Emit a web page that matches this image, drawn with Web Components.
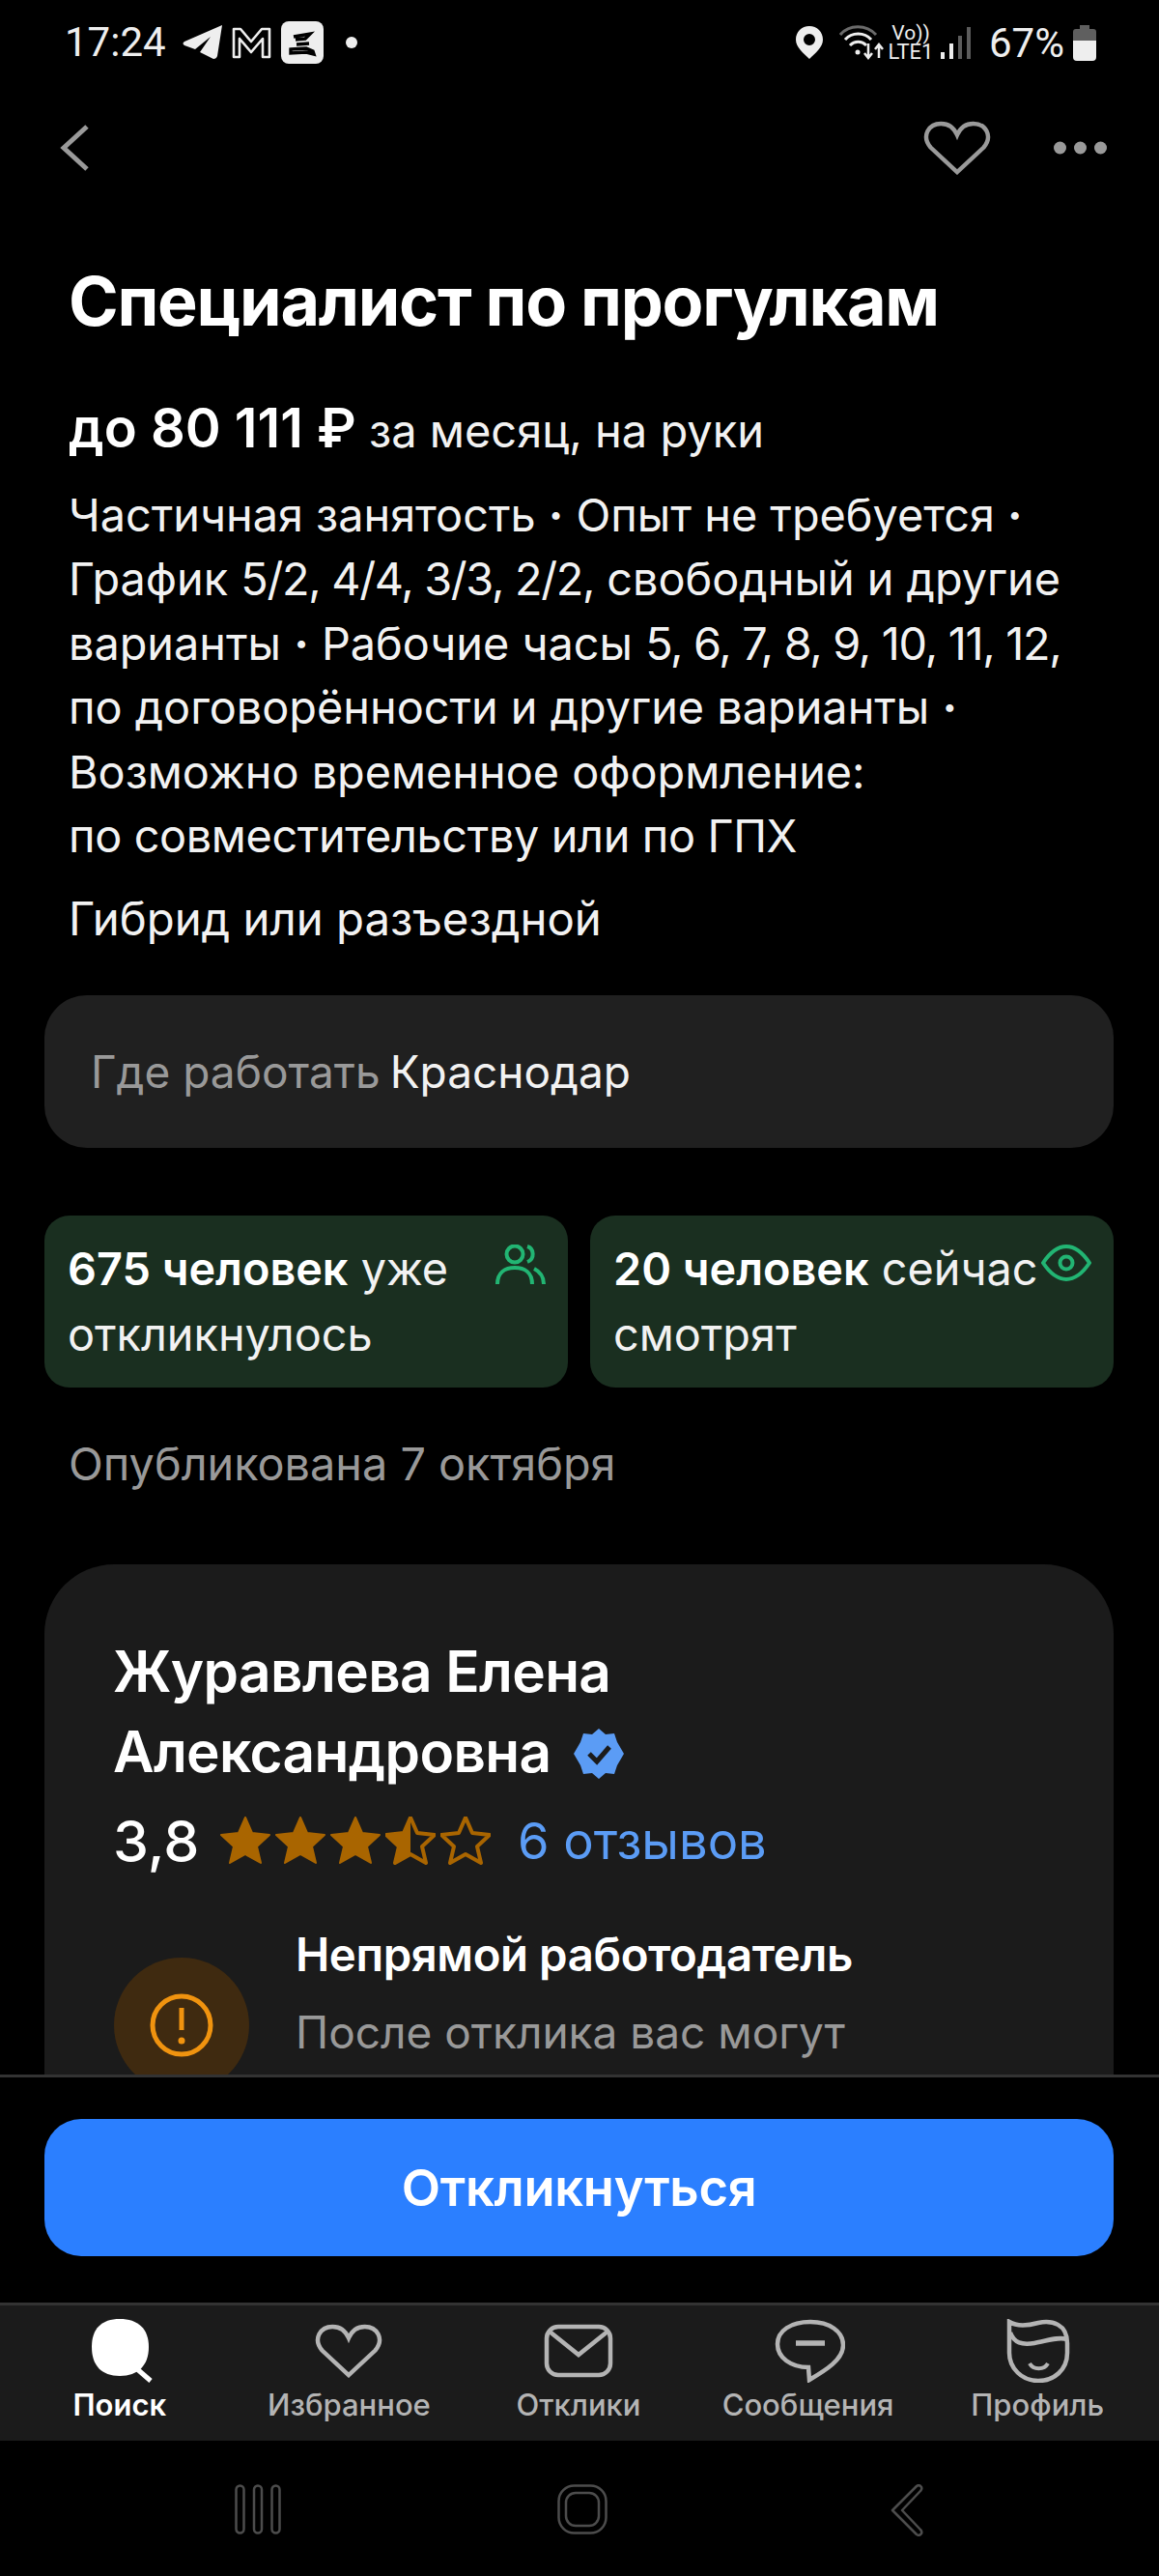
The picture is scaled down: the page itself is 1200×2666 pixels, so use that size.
<!DOCTYPE html>
<html lang="ru">
<head>
<meta charset="utf-8">
<title>Специалист по прогулкам</title>
<style>
html, body { margin: 0; padding: 0; background: #000; }
body { width: 1200px; height: 2666px; overflow: hidden; font-family: Inter, "Noto Sans", sans-serif; color: #fff; }
</style>
</head>
<body>
<job-screen>
  <status-bar slot="status"></status-bar>
  <top-bar slot="top"></top-bar>
  <job-summary slot="content"></job-summary>
  <place-box slot="content">Краснодар</place-box>
  <div slot="content" style="display:grid;grid-template-columns:542px 542px;gap:23px;margin:70px 46px 0">
    <stat-card icon="people"><b>675 человек</b> уже<br>откликнулось</stat-card>
    <stat-card icon="eye"><b>20 человек</b> сейчас<br>смотрят</stat-card>
  </div>
  <div slot="content" style="margin:44px 71px 0;font-size:46.8px;line-height:70px;color:#999">Опубликована 7 октября</div>
  <employer-card slot="content"></employer-card>
  <apply-bar slot="apply"></apply-bar>
  <tab-bar slot="tabs"></tab-bar>
  <nav-bar slot="nav"></nav-bar>
</job-screen>

<script>
class JobScreen extends HTMLElement {
  constructor() {
    super();
    this.attachShadow({mode: 'open'}).innerHTML = `
<style>
:host { display: flex; flex-direction: column; width: 1200px; height: 2666px; background: #000; }
.content { flex: 1; min-height: 0; overflow: hidden; }
</style>
<slot name="status"></slot>
<slot name="top"></slot>
<div class="content"><slot name="content"></slot></div>
<slot name="apply"></slot>
<slot name="tabs"></slot>
<slot name="nav"></slot>`;
  }
}

class StatusBar extends HTMLElement {
  constructor() {
    super();
    this.attachShadow({mode: 'open'}).innerHTML = `
<style>
:host { display: flex; align-items: center; justify-content: space-between; height: 88px; padding: 0 65px 0 67px; font-family: Roboto, sans-serif; color: #eee; }
.side { display: flex; align-items: center; }
.time { font-size: 42px; line-height: 88px; width: 121px; }
.pct { font-size: 42px; margin-left: 18px; width: 85px; }
svg { display: block; }
.lte { display: flex; flex-direction: column; align-items: center; width: 44px; margin-left: 6px; font-size: 22px; line-height: 19px; }
.lte span:first-child { font-size: 21px; }
</style>
<div class="side">
  <span class="time">17:24</span>
  <svg width="44" height="40" viewBox="0 0 44 40" fill="#eee"><path d="M42 2 L3 19 Q0 21 3 23 L14 27 L30 14 L19 30 L33 37 Q36 37 37 34 Z"/></svg>
  <svg width="45" height="34" viewBox="0 0 45 34" fill="none" stroke="#eee" stroke-width="2.6" style="margin-left:6px"><path d="M4 32 V3 H11 L22 16 L33 3 H41 V32 H34 V13 L22 27 L10 13 V32 Z" stroke-linejoin="round"/></svg>
  <svg width="44" height="44" viewBox="0 0 44 44" style="margin-left:8px"><rect width="44" height="44" rx="8" fill="#eee"/><path d="M13 16 L30 13 L25 18 L15 19 M16 24 L29 23 M10 29 L26 28 L33 31 L34 34 L26 32 L10 33 Z" fill="none" stroke="#000" stroke-width="3.4"/></svg>
  <svg width="12" height="12" viewBox="0 0 12 12" style="margin-left:23px"><circle cx="6" cy="6" r="6" fill="#eee"/></svg>
</div>
<div class="side">
  <svg width="28" height="34" viewBox="0 0 28 34"><path fill-rule="evenodd" fill="#eee" d="M14 0 C6 0 0 6 0 14 C0 22 8 28 14 34 C20 28 28 22 28 14 C28 6 22 0 14 0 Z M14 8 A6 6 0 1 1 14 20 A6 6 0 1 1 14 8 Z"/></svg>
  <svg width="46" height="36" viewBox="0 0 46 36" fill="none" style="margin-left:17px">
    <path d="M1 10 C10 -1 28 -1 38 10" stroke="#6a6a6a" stroke-width="3"/>
    <path d="M6 15 C13 7 26 7 33 15" stroke="#eee" stroke-width="3"/>
    <path d="M11 21 C16 16 23 16 28 21" stroke="#eee" stroke-width="3"/>
    <circle cx="19" cy="28" r="2.5" fill="#eee"/>
    <path d="M30 19 V34 M26 29 L30 34 L34 29 M41 34 V20 M37 25 L41 20 L45 25" stroke="#eee" stroke-width="2.5"/>
  </svg>
  <div class="lte"><span>Vo))</span><span>LTE1</span></div>
  <svg width="32" height="34" viewBox="0 0 32 34" style="margin-left:9px"><rect x="0" y="27" width="4" height="7" fill="#eee"/><rect x="9" y="18" width="4" height="16" fill="#eee"/><rect x="18" y="10" width="4" height="24" fill="#5c5c5c"/><rect x="27" y="1" width="4" height="33" fill="#5c5c5c"/></svg>
  <span class="pct">67%</span>
  <svg width="24" height="37" viewBox="0 0 24 37" style="margin-left:2px"><path d="M7 0 H17 V4 H21 Q24 4 24 7 V16 H0 V7 Q0 4 3 4 H7 Z" fill="#5f5f5f"/><path d="M0 16 H24 V33 Q24 37 20 37 H4 Q0 37 0 33 Z" fill="#eee"/></svg>
</div>`;
  }
}

class TopBar extends HTMLElement {
  constructor() {
    super();
    this.attachShadow({mode: 'open'}).innerHTML = `
<style>
:host { display: flex; align-items: center; height: 130px; padding: 0 54px 0 62px; }
svg { display: block; }
.gap { flex: 1; }
</style>
<svg width="30" height="50" viewBox="0 0 30 50" fill="none" stroke="#9a9a9a" stroke-width="5"><path d="M28 3 L4 25 L28 47"/></svg>
<div class="gap"></div>
<svg width="74" height="56" viewBox="0 0 72 57" fill="none" stroke="#9a9a9a" stroke-width="4.5"><path d="M36 54 L8 28 C-2 16 6 3 19 3 C27 3 33 8 36 15 C39 8 45 3 53 3 C66 3 74 16 64 28 Z"/></svg>
<svg width="55" height="14" viewBox="0 0 55 14" fill="#9a9a9a" style="margin-left:63px"><circle cx="6.5" cy="7" r="6.5"/><circle cx="27.5" cy="7" r="6.5"/><circle cx="48.5" cy="7" r="6.5"/></svg>`;
  }
}

class JobSummary extends HTMLElement {
  constructor() {
    super();
    this.attachShadow({mode: 'open'}).innerHTML = `
<style>
:host { display: block; padding: 52px 71px 0; color: #f2f2f2; font-family: Inter, sans-serif; }
h1 { margin: 0; font-size: 70px; line-height: 84px; font-weight: 700; letter-spacing: -1.3px; color: #fff; }
.pay { margin-top: 54px; font-size: 47px; line-height: 70px; white-space: nowrap; }
.pay b { font-size: 56px; font-weight: 600; color: #fff; }
.terms { margin-top: 19px; font-size: 46.8px; line-height: 66.4px; white-space: nowrap; }
.format { margin-top: 20px; font-size: 47.3px; line-height: 66px; }
.tight { letter-spacing: -1.3px; }
.short { letter-spacing: -0.35px; }
i { font-style: normal; font-weight: 700; }
</style>
<h1>Специалист по прогулкам</h1>
<div class="pay"><b>до 80 111 ₽</b> за месяц, на руки</div>
<div class="terms">Частичная занятость <i>·</i> Опыт не требуется <i>·</i><br>График <span class="tight">5/2, 4/4, 3/3, 2/2,</span> свободный и другие<br>варианты <i>·</i> Рабочие часы <span class="tight">5, 6, 7, 8, 9, 10, 11, 12,</span><br>по договорённости и другие варианты <i>·</i><br>Возможно временное оформление:<br><span class="short">по совместительству или по ГПХ</span></div>
<div class="format">Гибрид или разъездной</div>`;
  }
}

class PlaceBox extends HTMLElement {
  constructor() {
    super();
    this.attachShadow({mode: 'open'}).innerHTML = `
<style>
:host { display: flex; align-items: center; height: 158px; margin: 46px 47px 0 46px; padding-left: 48px; background: #202020; border-radius: 44px; font-size: 46px; color: #f2f2f2; }
span { color: #999; margin-right: 10px; }
</style>
<span>Где работать</span><slot></slot>`;
  }
}

const STAT_ICONS = {
  people: `<svg width="52" height="42" viewBox="0 0 52 42" fill="none" stroke="#22b573" stroke-width="4"><circle cx="20" cy="10" r="8.5"/><path d="M2 41 C2 29 10 24 20 24 C30 24 38 29 38 41"/><path d="M33 2 C40 4 41 15 33 18 M40 25 C46 28 50 33 50 41"/></svg>`,
  eye: `<svg width="52" height="38" viewBox="0 0 52 38" fill="none" stroke="#22b573" stroke-width="4"><path d="M2 19 C10 7 18 2 26 2 C34 2 42 7 50 19 C42 31 34 36 26 36 C18 36 10 31 2 19 Z"/><circle cx="26" cy="19" r="6.5"/></svg>`
};

class StatCard extends HTMLElement {
  constructor() {
    super();
    this.attachShadow({mode: 'open'}).innerHTML = `
<style>
:host { display: block; position: relative; height: 178px; box-sizing: border-box; padding: 21px 0 0 24px; background: #1a2f20; border-radius: 26px; font-size: 46.8px; line-height: 68px; color: #f2f2f2; white-space: nowrap; }
::slotted(b) { font-weight: 600; color: #fff; }
.icon { position: absolute; top: 30px; right: 23px; }
svg { display: block; }
</style>
<slot></slot>
<div class="icon">${STAT_ICONS[this.getAttribute('icon')]}</div>`;
  }
}

const STAR = 'M26 1 L33 17 L51 19 L38 31 L42 48 L26 39 L10 48 L14 31 L1 19 L19 17 Z';

class EmployerCard extends HTMLElement {
  constructor() {
    super();
    this.attachShadow({mode: 'open'}).innerHTML = `
<style>
:host { display: block; margin: 69px 47px 0 46px; padding: 69px 72px 0; height: 600px; box-sizing: border-box; background: #1b1b1b; border-radius: 72px 72px 0 0; color: #fff; }
.name { margin-left: -1px; font-size: 58.5px; line-height: 83px; font-weight: 600; letter-spacing: -0.6px; }
.name svg { vertical-align: -7px; margin-left: 23px; }
.rating { display: flex; align-items: center; height: 60px; margin-top: 21px; }
.score { margin-left: -1px; font-size: 59px; font-weight: 500; width: 111px; }
.stars { display: flex; gap: 5px; }
svg { display: block; }
.name svg { display: inline-block; }
.reviews { margin-left: 28px; font-size: 52.5px; color: #5b9cf5; }
.warn { display: flex; margin-top: 26px; }
.circle { flex: none; display: flex; align-items: center; justify-content: center; width: 140px; height: 140px; margin-top: 65px; border-radius: 50%; background: #3f2a10; }
.text { margin-left: 48px; margin-top: 32px; }
.t1 { font-size: 47.3px; line-height: 60px; font-weight: 600; letter-spacing: -0.4px; }
.t2 { margin-top: 20px; font-size: 46px; line-height: 60px; color: #999; }
</style>
<div class="name">Журавлева Елена<br>Александровна<svg width="52" height="52" viewBox="0 0 52 52"><path fill="#5b9cf5" d="M26 0 L33 6 L42 5 L45 14 L52 26 L45 38 L42 47 L33 46 L26 52 L19 46 L10 47 L7 38 L0 26 L7 14 L10 5 L19 6 Z"/><path d="M16 26 L24 34 L37 19" fill="none" stroke="#1b1b1b" stroke-width="5"/></svg></div>
<div class="rating">
  <span class="score">3,8</span>
  <div class="stars">
    <svg width="52" height="50" viewBox="0 0 52 50"><path fill="#a96500" stroke="#a96500" stroke-width="2" stroke-linejoin="round" d="${STAR}"/></svg>
    <svg width="52" height="50" viewBox="0 0 52 50"><path fill="#a96500" stroke="#a96500" stroke-width="2" stroke-linejoin="round" d="${STAR}"/></svg>
    <svg width="52" height="50" viewBox="0 0 52 50"><path fill="#a96500" stroke="#a96500" stroke-width="2" stroke-linejoin="round" d="${STAR}"/></svg>
    <svg width="52" height="50" viewBox="0 0 52 50"><path fill="none" stroke="#a96500" stroke-width="4" stroke-linejoin="round" d="${STAR}"/><path fill="#a96500" d="M26 1 L19 17 L1 19 L14 31 L10 48 L26 39 Z"/></svg>
    <svg width="52" height="50" viewBox="0 0 52 50"><path fill="none" stroke="#a96500" stroke-width="4" stroke-linejoin="round" d="${STAR}"/></svg>
  </div>
  <span class="reviews">6 отзывов</span>
</div>
<div class="warn">
  <div class="circle"><svg width="66" height="66" viewBox="0 0 66 66" fill="none" stroke="#f0930f" stroke-width="5"><circle cx="33" cy="33" r="30"/><path d="M33 15 V38"/><circle cx="33" cy="49" r="2.5" fill="#f0930f" stroke-width="2"/></svg></div>
  <div class="text"><div class="t1">Непрямой работодатель</div><div class="t2">После отклика вас могут</div></div>
</div>`;
  }
}

class ApplyBar extends HTMLElement {
  constructor() {
    super();
    this.attachShadow({mode: 'open'}).innerHTML = `
<style>
:host { display: block; height: 236px; box-sizing: border-box; border-top: 3px solid #333; padding: 43px 47px 0 46px; background: #000; }
button { display: block; width: 100%; height: 142px; border: 0; border-radius: 38px; background: #2b7fff; color: #fff; font: 600 52.5px Inter, sans-serif; letter-spacing: -0.3px; }
</style>
<button>Откликнуться</button>`;
  }
}

class TabItem extends HTMLElement {
  constructor() {
    super();
    this.attachShadow({mode: 'open'}).innerHTML = `
<style>
:host { display: flex; flex-direction: column; align-items: center; color: #b4b4b4; font-size: 31px; line-height: 40px; font-weight: 500; }
:host([active]) { color: #fff; font-weight: 600; }
.ico { height: 80px; display: flex; align-items: flex-end; justify-content: center; margin-bottom: 3px; }
</style>
<div class="ico"><slot name="icon"></slot></div>
<slot></slot>`;
  }
}

class TabBar extends HTMLElement {
  constructor() {
    super();
    this.attachShadow({mode: 'open'}).innerHTML = `
<style>
:host { display: grid; grid-template-columns: repeat(5, 237.6px); height: 143px; box-sizing: border-box; border-top: 3px solid #333; padding: 0 7px 0 5px; background: #1b1b1b; font-family: Inter, sans-serif; }
svg { display: block; }
</style>
<tab-item active>
  <svg slot="icon" width="70" height="66" viewBox="0 0 70 66"><path fill="#fff" d="M35 0 C54 0 65 10 65 29 C65 48 54 59 35 59 C16 59 6 48 6 29 C6 10 16 0 35 0 Z"/><path d="M52 51 L67 64" stroke="#fff" stroke-width="5"/></svg>
  Поиск
</tab-item>
<tab-item>
  <svg slot="icon" width="72" height="56" viewBox="0 0 72 57" fill="none" stroke="#b4b4b4" stroke-width="4.5" style="margin-bottom:5px"><path d="M36 54 L8 28 C-2 16 6 3 19 3 C27 3 33 8 36 15 C39 8 45 3 53 3 C66 3 74 16 64 28 Z"/></svg>
  Избранное
</tab-item>
<tab-item>
  <svg slot="icon" width="72" height="56" viewBox="0 0 72 56" fill="none" stroke="#b4b4b4" stroke-width="4.5" style="margin-bottom:5px"><rect x="3" y="3" width="66" height="50" rx="12"/><path d="M6 8 L36 32 L66 8"/></svg>
  Отклики
</tab-item>
<tab-item>
  <svg slot="icon" width="76" height="66" viewBox="0 0 76 66" fill="none" stroke="#b4b4b4" stroke-width="4.5"><path d="M38 50 C20 50 6 40 6 26 C6 12 20 3 40 3 C60 3 74 13 74 27 C74 42 56 53 39 63 Z"/><path d="M25 25 H55" stroke-width="5.5"/></svg>
  Сообщения
</tab-item>
<tab-item>
  <svg slot="icon" width="70" height="66" viewBox="0 0 70 66" fill="none" stroke="#b4b4b4" stroke-width="4.5"><path d="M6 3 C14 8 25 7 36 4 C50 1 66 5 66 25 L66 35 C66 53 52 64 36 64 C19 64 6 51 6 35 Z"/><path d="M7 14 C11 25 19 27 32 25 C44 23 56 18 66 21"/><path d="M27 46 C31 53 42 53 46 46" stroke-width="4"/></svg>
  Профиль
</tab-item>`;
  }
}

class NavBar extends HTMLElement {
  constructor() {
    super();
    this.attachShadow({mode: 'open'}).innerHTML = `
<style>
:host { display: block; position: relative; flex: none; height: 140px; background: #000; }
svg { display: block; position: absolute; top: 45px; }
</style>
<svg style="left:243px" width="48" height="52" viewBox="0 0 48 52" fill="none" stroke="#4c4c4c" stroke-width="2.5"><rect x="1.5" y="1.5" width="8" height="49" rx="4"/><rect x="20" y="1.5" width="8" height="49" rx="4"/><rect x="38.5" y="1.5" width="8" height="49" rx="4"/></svg>
<svg style="left:577px" width="52" height="52" viewBox="0 0 52 52" fill="none" stroke="#4c4c4c" stroke-width="2.5"><rect x="1.5" y="1.5" width="49" height="49" rx="16"/><rect x="9" y="9" width="34" height="34" rx="10"/></svg>
<svg style="left:922px" width="34" height="54" viewBox="0 0 34 54" fill="none" stroke="#4c4c4c" stroke-width="2.5" stroke-linejoin="round"><path d="M27 2 Q30 0 32 3 Q33 5 31 7 L12 27 L31 47 Q33 49 32 51 Q30 54 27 52 L2 27 Z"/></svg>`;
  }
}

customElements.define('job-screen', JobScreen);
customElements.define('status-bar', StatusBar);
customElements.define('top-bar', TopBar);
customElements.define('job-summary', JobSummary);
customElements.define('place-box', PlaceBox);
customElements.define('stat-card', StatCard);
customElements.define('employer-card', EmployerCard);
customElements.define('apply-bar', ApplyBar);
customElements.define('tab-item', TabItem);
customElements.define('tab-bar', TabBar);
customElements.define('nav-bar', NavBar);
</script>
</body>
</html>
